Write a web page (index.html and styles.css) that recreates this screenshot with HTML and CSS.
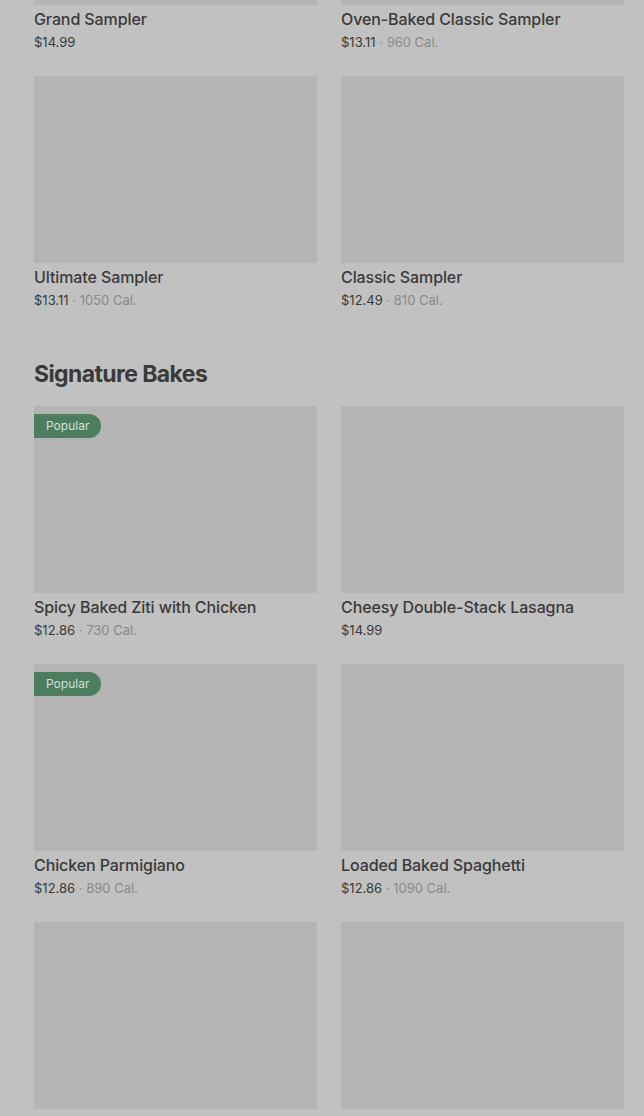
FILE: index.html
```html
<!DOCTYPE html>
<html>
<head>
<meta charset="utf-8">
<link rel="stylesheet" href="styles.css">
</head>
<body>
<div class="page">
  <div class="grid first">
    <div class="card">
      <div class="thumb"></div>
      <div class="name">Grand Sampler</div>
      <div class="meta"><span class="price">$14.99</span></div>
    </div>
    <div class="card">
      <div class="thumb"></div>
      <div class="name">Oven-Baked Classic Sampler</div>
      <div class="meta"><span class="price">$13.11</span><span class="cal"> · 960 Cal.</span></div>
    </div>
    <div class="card">
      <div class="thumb"></div>
      <div class="name">Ultimate Sampler</div>
      <div class="meta"><span class="price">$13.11</span><span class="cal"> · 1050 Cal.</span></div>
    </div>
    <div class="card">
      <div class="thumb"></div>
      <div class="name">Classic Sampler</div>
      <div class="meta"><span class="price">$12.49</span><span class="cal"> · 810 Cal.</span></div>
    </div>
  </div>

  <section class="section">
    <h2 class="heading">Signature Bakes</h2>
    <div class="grid">
      <div class="card">
        <div class="thumb"><span class="badge">Popular</span></div>
        <div class="name">Spicy Baked Ziti with Chicken</div>
        <div class="meta"><span class="price">$12.86</span><span class="cal"> · 730 Cal.</span></div>
      </div>
      <div class="card">
        <div class="thumb"></div>
        <div class="name">Cheesy Double-Stack Lasagna</div>
        <div class="meta"><span class="price">$14.99</span></div>
      </div>
      <div class="card">
        <div class="thumb"><span class="badge">Popular</span></div>
        <div class="name">Chicken Parmigiano</div>
        <div class="meta"><span class="price">$12.86</span><span class="cal"> · 890 Cal.</span></div>
      </div>
      <div class="card">
        <div class="thumb"></div>
        <div class="name">Loaded Baked Spaghetti</div>
        <div class="meta"><span class="price">$12.86</span><span class="cal"> · 1090 Cal.</span></div>
      </div>
      <div class="card">
        <div class="thumb"></div>
        <div class="name">&nbsp;</div>
        <div class="meta">&nbsp;</div>
      </div>
      <div class="card">
        <div class="thumb"></div>
        <div class="name">&nbsp;</div>
        <div class="meta">&nbsp;</div>
      </div>
    </div>
  </section>
</div>
</body>
</html>
```
FILE: styles.css
```css
* { box-sizing: border-box; }
html, body {
  margin: 0;
  padding: 0;
  background: #c1c1c1;
  overflow: hidden;
}
body {
  font-family: Inter, "Noto Sans", "Liberation Sans", sans-serif;
  color: #3b3b3b;
}
.page {
  padding: 0 20px 0 34px;
  margin-top: -182px;
}
.grid {
  display: grid;
  grid-template-columns: 283px 283px;
  column-gap: 24px;
  row-gap: 24px;
}
.card {
  display: flex;
  flex-direction: column;
}
.thumb {
  position: relative;
  height: 187px;
  background: #b4b4b4;
}
.badge {
  position: absolute;
  left: 0;
  top: 8px;
  height: 24px;
  padding: 0 12px;
  background: #4c7d5f;
  color: #d3e1d7;
  font-size: 12px;
  line-height: 24px;
  border-radius: 0 12px 12px 0;
}
.name {
  margin-top: 4px;
  font-size: 16px;
  line-height: 20px;
  font-weight: 500;
  letter-spacing: -0.1px;
  color: #3a3a3a;
  white-space: nowrap;
}
.meta {
  margin-top: 3px;
  font-size: 13px;
  line-height: 20px;
}
.price { color: #3a3a3a; }
.cal { color: #8a8a8a; }
.section {
  padding-top: 48px;
}
.heading {
  margin: 0 0 16px;
  font-size: 23px;
  line-height: 32px;
  font-weight: 700;
  letter-spacing: -0.6px;
  color: #3a3a3a;
}
```
